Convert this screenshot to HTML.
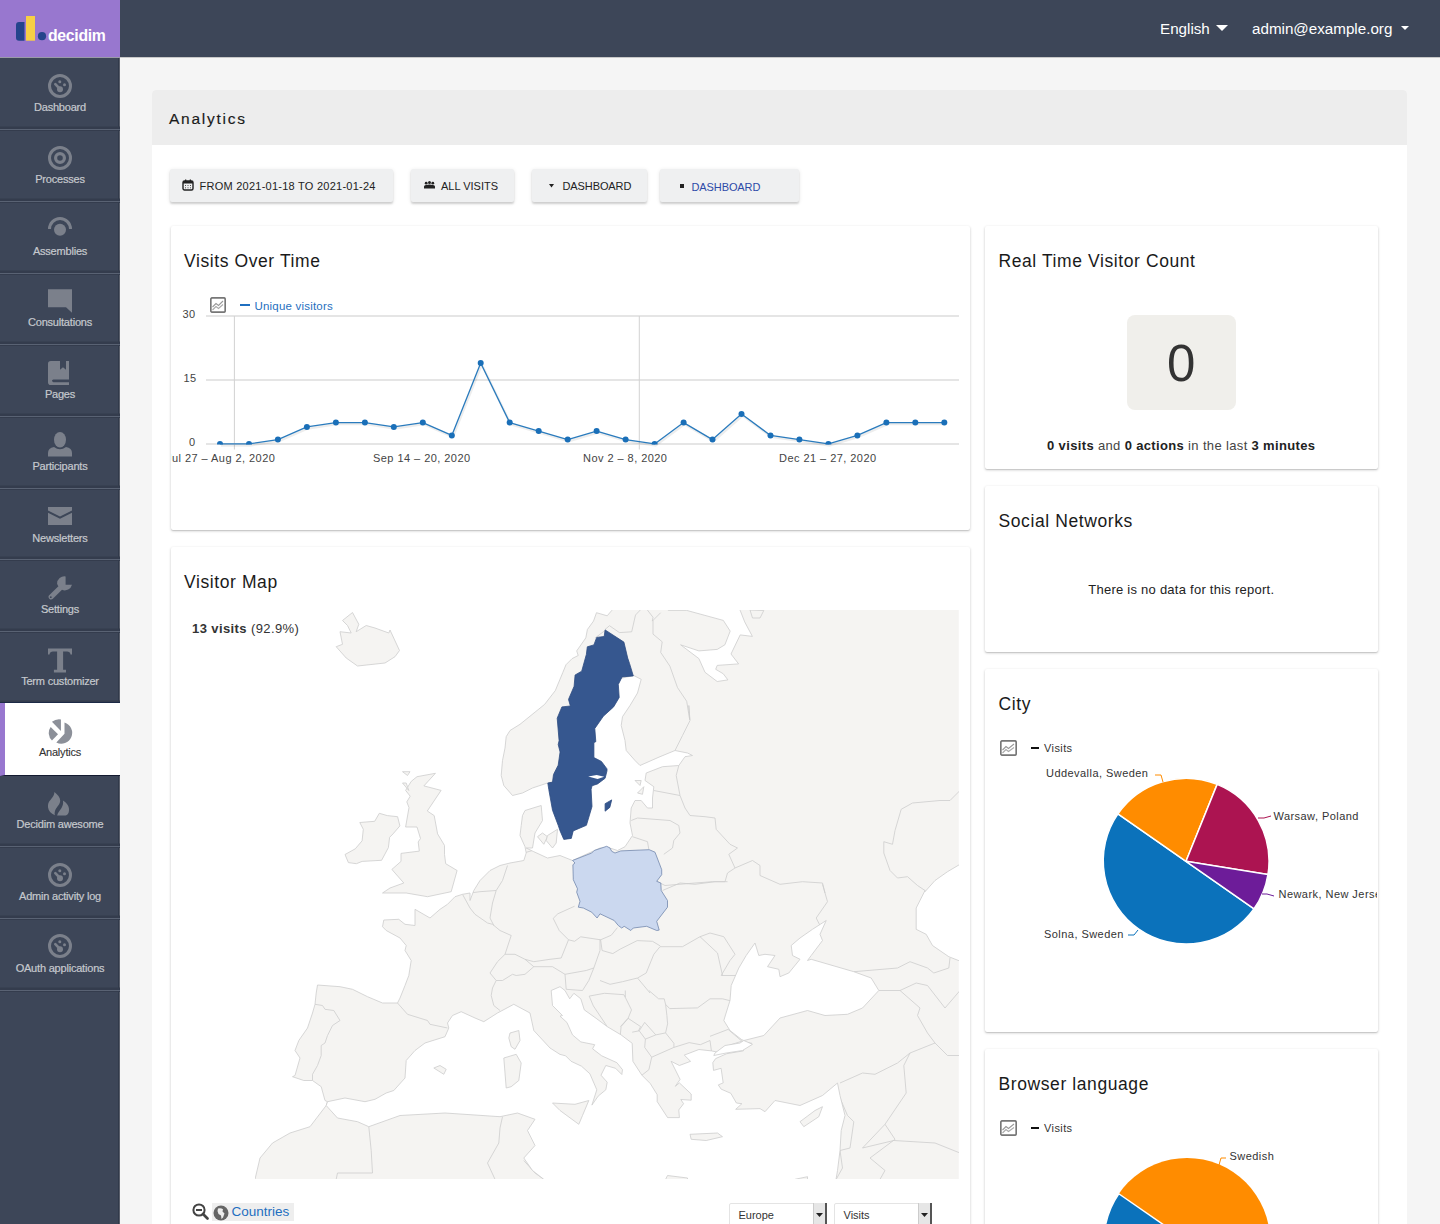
<!DOCTYPE html>
<html><head><meta charset="utf-8">
<style>
*{box-sizing:border-box;margin:0;padding:0}
html,body{width:1440px;height:1224px;overflow:hidden;background:#f5f5f5;font-family:"Liberation Sans",sans-serif;}
.abs{position:absolute}
#side{position:absolute;left:0;top:0;width:120px;height:1224px;background:#3d4658;box-shadow:inset -1px 0 0 #5a5f6b, inset -2px 0 0 #313a4b}
#logo{position:absolute;left:0;top:0;width:120px;height:58px;background:#9877cf;border-bottom:1px solid #9a9aa8}
.nav{position:absolute;left:0;width:120px;height:71.72px;border-bottom:1.5px solid #596273;box-shadow:0 1px 0 #343c4d, inset 0 -2.5px 0 #343c4d;text-align:center;color:#c6c9ce;font-size:11px;letter-spacing:-0.2px;-webkit-text-stroke:0.2px #c6c9ce}
.nav .lbl{position:absolute;left:0;right:0;top:41.8px;line-height:14px}
.nav svg{position:absolute;left:48px;top:15.4px}
.nav.act{background:#fff;color:#333;-webkit-text-stroke:0.1px #333;border-left:5px solid #9877cf;border-bottom-color:#141a30;width:120px;box-shadow:0 -1px 0 #1c2a46}
.nav.act svg{left:43px}
.nav.act .lbl{left:-5px}
#top{position:absolute;left:120px;top:0;width:1320px;height:58px;background:#3d4658;border-bottom:1px solid #c8c8c8}
#top .lnk{position:absolute;top:19px;color:#fff;font-size:15.2px;line-height:20px}
.caret{display:inline-block;width:0;height:0;border-left:6px solid transparent;border-right:6px solid transparent;border-top:6px solid #fff;vertical-align:middle;margin-left:6px;position:relative;top:-2px}
#card{position:absolute;left:152px;top:90px;width:1255px;height:1200px;background:#fff;border-radius:4px 4px 0 0;}
#card .hd{height:55px;background:#ededed;border-radius:4px 4px 0 0;position:relative}
#card .hd span{position:absolute;left:17px;top:19.5px;font-size:15.5px;letter-spacing:1.75px;color:#1a1a1a;-webkit-text-stroke:0.15px #1a1a1a}
.btn{position:absolute;top:169px;height:33px;background:#eff0f1;box-shadow:0 2px 2px rgba(0,0,0,.14),0 1px 4px rgba(0,0,0,.10);border-radius:2px;font-size:11px;color:#222;line-height:33px;white-space:nowrap}
.btn .t{position:absolute;top:1px}
.w{position:absolute;background:#fff;box-shadow:0 1px 1px rgba(0,0,0,.10),0 1px 3px rgba(0,0,0,.20);border-radius:2px}
.w h2{position:absolute;left:13.5px;top:24px;font-weight:normal;font-size:17.5px;color:#1a1a1a;line-height:22px;letter-spacing:.59px;white-space:nowrap}
.tx{position:absolute;white-space:nowrap;line-height:1}
</style></head><body>
<div id="side">
  <div id="logo">
    <svg width="120" height="57" viewBox="0 0 120 57">
      <path d="M19 22h5.5v18.7H19a3 3 0 0 1-3-3V25a3 3 0 0 1 3-3z" fill="#24448c"/>
      <rect x="26" y="16" width="9" height="24.7" fill="#f7cf45"/>
      <circle cx="42" cy="36.2" r="4.1" fill="#24448c"/>
      <text x="48" y="40.7" font-family="Liberation Sans" font-weight="bold" font-size="15.8" fill="#fff" letter-spacing="-0.3">decidim</text>
    </svg>
  </div>
<div class="nav" style="top:58.40px"><svg width="24" height="25" viewBox="0 0 24 25"><circle cx="12" cy="12" r="10.5" fill="none" stroke="#7b808b" stroke-width="3"/><circle cx="11.8" cy="7.8" r="1.5" fill="#7b808b"/><circle cx="16.5" cy="10.7" r="1.5" fill="#7b808b"/><path d="M7.3 10.1L12 15" stroke="#7b808b" stroke-width="2.6" stroke-linecap="round"/><circle cx="12" cy="15.3" r="3" fill="#7b808b"/></svg><div class="lbl">Dashboard</div></div>
<div class="nav" style="top:130.12px"><svg width="24" height="25" viewBox="0 0 24 25"><circle cx="12" cy="12" r="10.5" fill="none" stroke="#7b808b" stroke-width="3"/><circle cx="12" cy="12" r="4.4" fill="none" stroke="#7b808b" stroke-width="3.2"/></svg><div class="lbl">Processes</div></div>
<div class="nav" style="top:201.84px"><svg width="24" height="25" viewBox="0 0 24 25"><path d="M1.5 12A10.5 10.5 0 0 1 22.5 12" fill="none" stroke="#7b808b" stroke-width="3"/><circle cx="12" cy="12.8" r="6" fill="#7b808b"/></svg><div class="lbl">Assemblies</div></div>
<div class="nav" style="top:273.56px"><svg width="24" height="25" viewBox="0 0 24 25"><path d="M0 0.2H24V23.8L18 18.2H0Z" fill="#7b808b"/></svg><div class="lbl">Consultations</div></div>
<div class="nav" style="top:345.28px"><svg width="24" height="25" viewBox="0 0 24 25"><path d="M2.8 0H12V8.8L15 6.3L18 8.8V0H21V18.5H5.4A1.9 1.4 0 0 0 5.4 21.2H21V24H2.8A2.8 2.8 0 0 1 0 21.2V2.8A2.8 2.8 0 0 1 2.8 0Z" fill="#7b808b"/></svg><div class="lbl">Pages</div></div>
<div class="nav" style="top:417.00px"><svg width="24" height="25" viewBox="0 0 24 25"><ellipse cx="12" cy="7.8" rx="6" ry="7.7" fill="#7b808b"/><path d="M0 24.5V21Q0 16 6 15Q12 19.5 18 15Q24 16 24 21V24.5Z" fill="#7b808b"/></svg><div class="lbl">Participants</div></div>
<div class="nav" style="top:488.72px"><svg width="24" height="25" viewBox="0 0 24 25"><path d="M0 2.9H24V6.6L12 12.6L0 6.6Z" fill="#7b808b"/><path d="M0 8.7L12 14.7L24 8.7V21.1H0Z" fill="#7b808b"/></svg><div class="lbl">Newsletters</div></div>
<div class="nav" style="top:560.44px"><svg width="24" height="25" viewBox="0 0 24 25"><path d="M9.1 7.7A7.4 7.4 0 0 1 17.6 0.4V8.8H24A7.4 7.4 0 0 1 14 13.8L4.6 23.1A2.7 2.7 0 0 1 0.9 19.4L10.4 10.2A7.4 7.4 0 0 1 9.1 7.7Z" fill="#7b808b"/><circle cx="2.8" cy="21.2" r="0.9" fill="#3d4658"/></svg><div class="lbl">Settings</div></div>
<div class="nav" style="top:632.16px"><svg width="24" height="25" viewBox="0 0 24 25"><path d="M0 0.6H24V6.4H22.5Q22 3.6 19 3.6H15.1V21.7H18V24.4H5.9V21.7H9.1V3.6H5Q2 3.6 1.5 6.4H0Z" fill="#7b808b"/></svg><div class="lbl">Term customizer</div></div>
<div class="nav act" style="top:703.1px;height:72.5px"><svg width="25" height="26" viewBox="-0.6 -0.6 24 25" style="transform:translate(0px,0.5px) scale(1.04)"><path d="M15.1 3.6A10 10 0 1 1 7.5 22L15.1 14Z" fill="#8c9099"/><path d="M11.8 11.4L3.5 3A10.6 10.6 0 0 1 11.8 0.8Z" fill="#8c9099"/><path d="M9.1 14.4L2.3 7.8A9.5 9.5 0 0 0 3.5 20.2Z" fill="#8c9099"/></svg><div class="lbl">Analytics</div></div>
<div class="nav" style="top:775.60px"><svg width="24" height="25" viewBox="0 0 24 25"><path d="M6.4 0.9C10 4 13 7 12 11C11.5 14 8 16.5 7 20C6.5 22 6.5 23 7 24.3C2 22 -0.5 18.5 0 14C0.5 9 6.5 6.5 6.4 0.9Z" fill="#7b808b"/><path d="M14.9 9.6C19 12 21.5 16 21 19.5C20.8 22.5 19.5 24 17.5 24.5H9.1C10 21 12 19.5 13.5 17C15 14.5 15.5 12 14.9 9.6Z" fill="#7b808b"/></svg><div class="lbl">Decidim awesome</div></div>
<div class="nav" style="top:847.32px"><svg width="24" height="25" viewBox="0 0 24 25"><circle cx="12" cy="12" r="10.5" fill="none" stroke="#7b808b" stroke-width="3"/><circle cx="11.8" cy="7.8" r="1.5" fill="#7b808b"/><circle cx="16.5" cy="10.7" r="1.5" fill="#7b808b"/><path d="M7.3 10.1L12 15" stroke="#7b808b" stroke-width="2.6" stroke-linecap="round"/><circle cx="12" cy="15.3" r="3" fill="#7b808b"/></svg><div class="lbl">Admin activity log</div></div>
<div class="nav" style="top:919.04px"><svg width="24" height="25" viewBox="0 0 24 25"><circle cx="12" cy="12" r="10.5" fill="none" stroke="#7b808b" stroke-width="3"/><circle cx="11.8" cy="7.8" r="1.5" fill="#7b808b"/><circle cx="16.5" cy="10.7" r="1.5" fill="#7b808b"/><path d="M7.3 10.1L12 15" stroke="#7b808b" stroke-width="2.6" stroke-linecap="round"/><circle cx="12" cy="15.3" r="3" fill="#7b808b"/></svg><div class="lbl">OAuth applications</div></div>
</div>
<div id="top">
  <div class="lnk" style="left:1040px">English<span class="caret"></span></div>
  <div class="lnk" style="left:1132px">admin@example.org<span class="caret" style="border-width:4.5px 4px 0 4px;margin-left:9px"></span></div>
</div>
<div id="card"><div class="hd"><span>Analytics</span></div></div>

<div class="btn" style="left:169.5px;width:223px">
  <svg class="abs" style="left:12px;top:10px" width="12" height="12" viewBox="0 0 12 12"><rect x="1" y="2" width="10" height="9" rx="1.5" fill="none" stroke="#222" stroke-width="1.4"/><rect x="1" y="2" width="10" height="2.5" fill="#222"/><rect x="3" y="0.5" width="1.3" height="2.5" fill="#222"/><rect x="7.7" y="0.5" width="1.3" height="2.5" fill="#222"/><g fill="#555"><rect x="3" y="6" width="1" height="1"/><rect x="5.5" y="6" width="1" height="1"/><rect x="8" y="6" width="1" height="1"/><rect x="3" y="8.3" width="1" height="1"/><rect x="5.5" y="8.3" width="1" height="1"/><rect x="8" y="8.3" width="1" height="1"/></g></svg>
  <span class="t" style="left:30px;letter-spacing:.25px">FROM 2021-01-18 TO 2021-01-24</span></div>
<div class="btn" style="left:411px;width:102.5px">
  <svg class="abs" style="left:13px;top:12px" width="11" height="8" viewBox="0 0 11 8"><g fill="#222"><circle cx="2.2" cy="2.2" r="1.4"/><circle cx="5.5" cy="1.6" r="1.5"/><circle cx="8.8" cy="2.2" r="1.4"/><path d="M0 7.5V5.5Q0 4 2 4H3Q3.5 3.6 5.5 3.4Q7.5 3.6 8 4H9Q11 4 11 5.5V7.5Z"/></g></svg>
  <span class="t" style="left:30px">ALL VISITS</span></div>
<div class="btn" style="left:531.5px;width:115px">
  <svg class="abs" style="left:17px;top:15px" width="5" height="4" viewBox="0 0 5 4"><path d="M0 0H5L2.5 3.5Z" fill="#222"/></svg>
  <span class="t" style="left:31px;letter-spacing:-.1px">DASHBOARD</span></div>
<div class="btn" style="left:659.5px;width:139px">
  <svg class="abs" style="left:20px;top:15px" width="5" height="5" viewBox="0 0 5 5"><rect width="4" height="4" fill="#222"/></svg>
  <span class="t" style="left:32px;top:2px;color:#2d4aa8;letter-spacing:-.1px">DASHBOARD</span></div>

<!-- Visits over time -->
<div class="w" style="left:170.5px;top:226px;width:799.5px;height:303.5px"><h2>Visits Over Time</h2></div>
<svg width="1440" height="1224" style="position:absolute;left:0;top:0" viewBox="0 0 1440 1224">
<line x1="206" y1="316.1" x2="959" y2="316.1" stroke="#dcdcdc" stroke-width="1.5"/>
<line x1="206" y1="380.0" x2="959" y2="380.0" stroke="#dcdcdc" stroke-width="1.5"/>
<line x1="206" y1="443.9" x2="959" y2="443.9" stroke="#dcdcdc" stroke-width="1.5"/>
<line x1="234.4" y1="316" x2="234.4" y2="449.5" stroke="#d2d2d2" stroke-width="1"/>
<line x1="639.3" y1="316" x2="639.3" y2="449.5" stroke="#d2d2d2" stroke-width="1"/>
<polyline points="220.0,443.9 249.0,443.9 277.9,439.6 306.9,426.9 335.9,422.6 364.9,422.6 393.8,426.9 422.8,422.6 451.8,435.4 480.7,363.0 509.7,422.6 538.7,431.1 567.7,439.6 596.6,431.1 625.6,439.6 654.6,443.9 683.6,422.6 712.5,439.6 741.5,414.1 770.5,435.4 799.4,439.6 828.4,443.9 857.4,435.4 886.4,422.6 915.3,422.6 944.3,422.6" fill="none" stroke="rgba(0,0,0,0.07)" stroke-width="2.5" transform="translate(1,1.5)"/>
<polyline points="220.0,443.9 249.0,443.9 277.9,439.6 306.9,426.9 335.9,422.6 364.9,422.6 393.8,426.9 422.8,422.6 451.8,435.4 480.7,363.0 509.7,422.6 538.7,431.1 567.7,439.6 596.6,431.1 625.6,439.6 654.6,443.9 683.6,422.6 712.5,439.6 741.5,414.1 770.5,435.4 799.4,439.6 828.4,443.9 857.4,435.4 886.4,422.6 915.3,422.6 944.3,422.6" fill="none" stroke="#2a7bbd" stroke-width="1.3" stroke-linejoin="round"/>
<svg x="200" y="300" width="770" height="144.6" viewBox="200 300 770 144.6" overflow="hidden">
<circle cx="220.0" cy="443.9" r="3" fill="#1a6fb8"/>
<circle cx="249.0" cy="443.9" r="3" fill="#1a6fb8"/>
<circle cx="277.9" cy="439.6" r="3" fill="#1a6fb8"/>
<circle cx="306.9" cy="426.9" r="3" fill="#1a6fb8"/>
<circle cx="335.9" cy="422.6" r="3" fill="#1a6fb8"/>
<circle cx="364.9" cy="422.6" r="3" fill="#1a6fb8"/>
<circle cx="393.8" cy="426.9" r="3" fill="#1a6fb8"/>
<circle cx="422.8" cy="422.6" r="3" fill="#1a6fb8"/>
<circle cx="451.8" cy="435.4" r="3" fill="#1a6fb8"/>
<circle cx="480.7" cy="363.0" r="3" fill="#1a6fb8"/>
<circle cx="509.7" cy="422.6" r="3" fill="#1a6fb8"/>
<circle cx="538.7" cy="431.1" r="3" fill="#1a6fb8"/>
<circle cx="567.7" cy="439.6" r="3" fill="#1a6fb8"/>
<circle cx="596.6" cy="431.1" r="3" fill="#1a6fb8"/>
<circle cx="625.6" cy="439.6" r="3" fill="#1a6fb8"/>
<circle cx="654.6" cy="443.9" r="3" fill="#1a6fb8"/>
<circle cx="683.6" cy="422.6" r="3" fill="#1a6fb8"/>
<circle cx="712.5" cy="439.6" r="3" fill="#1a6fb8"/>
<circle cx="741.5" cy="414.1" r="3" fill="#1a6fb8"/>
<circle cx="770.5" cy="435.4" r="3" fill="#1a6fb8"/>
<circle cx="799.4" cy="439.6" r="3" fill="#1a6fb8"/>
<circle cx="828.4" cy="443.9" r="3" fill="#1a6fb8"/>
<circle cx="857.4" cy="435.4" r="3" fill="#1a6fb8"/>
<circle cx="886.4" cy="422.6" r="3" fill="#1a6fb8"/>
<circle cx="915.3" cy="422.6" r="3" fill="#1a6fb8"/>
<circle cx="944.3" cy="422.6" r="3" fill="#1a6fb8"/>
</svg>
</svg>
<svg class="abs" style="left:210px;top:297px" width="16" height="16" viewBox="0 0 16 16"><rect x="0.8" y="0.8" width="14.4" height="14.4" rx="1.5" fill="#fff" stroke="#777" stroke-width="1.7"/><polyline points="2.5,10 6,6.5 8.5,8.5 13,4" fill="none" stroke="#999" stroke-width="1.1"/><polyline points="2.5,13 6,9.5 8.5,11.5 13,7.5" fill="none" stroke="#aaa" stroke-width="1.1"/></svg>
<div class="abs" style="left:240px;top:304px;width:10px;height:2px;background:#1f6fc0"></div>
<div class="tx" style="left:254.5px;top:300.5px;font-size:11.5px;color:#1f6fc0;letter-spacing:.2px">Unique visitors</div>
<div class="tx" style="left:182.5px;top:309px;font-size:11px;color:#444;letter-spacing:.3px">30</div>
<div class="tx" style="left:183.5px;top:373px;font-size:11px;color:#444;letter-spacing:.3px">15</div>
<div class="tx" style="left:189px;top:437px;font-size:11px;color:#444">0</div>
<div class="abs" style="left:171px;top:440px;width:798px;height:30px;overflow:hidden">
  <div class="tx" style="left:-5px;top:12.5px;font-size:11px;color:#444;letter-spacing:.45px">Jul 27 – Aug 2, 2020</div>
  <div class="tx" style="left:202px;top:12.5px;font-size:11px;color:#444;letter-spacing:.45px">Sep 14 – 20, 2020</div>
  <div class="tx" style="left:412px;top:12.5px;font-size:11px;color:#444;letter-spacing:.45px">Nov 2 – 8, 2020</div>
  <div class="tx" style="left:608px;top:12.5px;font-size:11px;color:#444;letter-spacing:.45px">Dec 21 – 27, 2020</div>
</div>

<!-- Visitor map -->
<div class="w" style="left:170.5px;top:546.5px;width:799.5px;height:700px"><h2>Visitor Map</h2></div>
<svg width="703.75" height="569.0" viewBox="255 609.5 703.75 569.0" style="position:absolute;left:255px;top:609.5px;overflow:hidden">
<g stroke-linejoin="round">
<rect x="255" y="609.5" width="703.75" height="569.0" fill="#f5f4f2"/>
<g fill="none" stroke="#cdcdcd" stroke-width="0.8">
<polyline points="637.5,977.5 650.0,992.5"/>
<polyline points="589.2,995.6 604.4,992.8 623.9,994.2 625.3,996.9 631.5,1009.4 628.1,1017.8 621.1,1026.1 620.4,1033.8"/>
<polyline points="589.2,995.6 593.3,1005.3 607.2,1026.1"/>
<polyline points="620.4,1026.1 628.1,1017.8 640.6,1026.1 638.5,1030.3"/>
<polyline points="625.3,990.0 625.3,996.9"/>
<polyline points="639.2,1030.3 644.7,1021.9 655.8,1034.4"/>
<polyline points="665.6,1032.4 667.6,1023.3 666.9,1015.0 665.6,1003.9 664.2,998.3 658.6,998.3 648.9,990.0"/>
<polyline points="632.2,1031.7 639.2,1030.3 645.4,1038.6 644.7,1046.9 651.7,1056.7 648.9,1069.2 641.9,1074.7"/>
<polyline points="645.4,1038.6 655.8,1034.4 665.6,1032.4 673.9,1042.8 673.9,1046.9 651.7,1056.7"/>
<polyline points="673.9,1046.9 689.2,1042.1 700.3,1044.2 710.0,1040.0 711.4,1050.4"/>
<polyline points="710.0,1035.8 728.1,1028.9 741.9,1040.7"/>
<polyline points="665.6,1003.9 669.7,1008.1 697.5,1007.4 710.0,998.3 722.5,998.3 730.8,1000.4"/>
<polyline points="462.5,893.8 470.0,907.5 475.0,913.8 487.5,922.5 492.5,923.8 500.0,930.0 511.2,935.0 505.0,953.8"/>
<polyline points="470.0,892.5 480.0,891.2 496.2,890.0"/>
<polyline points="507.5,865.0 502.5,880.0 496.2,890.0 492.5,902.5 490.0,917.5 493.8,925.0"/>
<polyline points="523.8,852.5 532.5,850.0"/>
<polyline points="505.0,953.8 515.0,953.8 525.0,958.8 533.8,966.2 525.0,973.8 516.2,975.0 512.5,973.8 502.5,980.0 496.2,980.0 490.0,972.5 497.5,961.2 505.0,953.8"/>
<polyline points="525.0,958.8 533.8,961.2 550.0,958.8 561.2,957.5 568.5,939.3 559.3,930.1 553.2,917.9 557.8,913.3 574.6,905.7"/>
<polyline points="617.4,927.1 611.3,934.7 600.6,939.3 580.7,936.3 574.6,940.8 568.5,939.3"/>
<polyline points="600.6,939.3 602.1,950.0 612.8,953.1 620.4,948.5 637.2,940.1 652.5,940.8 660.2,945.4"/>
<polyline points="600.0,938.8 600.0,950.0 593.8,967.5 586.2,970.0 565.0,973.8 552.5,966.2 533.8,966.2"/>
<polyline points="565.0,973.8 566.2,988.8"/>
<polyline points="566.2,988.8 582.5,990.0 588.8,980.0 593.8,967.5"/>
<polyline points="496.2,980.0 492.5,987.5 491.2,995.0 493.8,1005.0 500.0,1010.0"/>
<polyline points="397.5,1002.5 407.5,1013.8 427.5,1020.0 430.0,1023.8 447.5,1027.5"/>
<polyline points="315.0,1003.8 322.5,1005.0 325.0,1008.8 333.8,1010.0 340.0,1020.0 332.5,1025.0 327.5,1035.0 325.0,1042.5 321.2,1045.0 321.2,1055.0 317.5,1065.0 312.5,1073.8 312.5,1080.0"/>
<polyline points="368.8,1126.2 371.2,1150.0 372.5,1172.5 337.5,1172.5 336.2,1178.8"/>
<polyline points="502.5,1116.2 500.0,1127.5 498.8,1142.5 487.5,1162.5 495.0,1178.8"/>
<polyline points="523.8,1160.0 535.0,1172.5 543.8,1178.8"/>
<polyline points="660.0,946.2 653.8,953.8 646.2,972.5 637.5,977.5 622.5,981.2 610.0,983.8 600.0,980.0"/>
<polyline points="660.0,946.2 682.5,946.2 700.0,936.2 710.0,932.5 723.8,936.2 735.0,953.8 730.0,960.0 721.2,975.0 737.5,975.0"/>
<polyline points="700.0,936.2 717.5,952.5 722.5,975.0"/>
<polyline points="662.5,890.0 680.0,882.5 695.0,883.8 715.0,881.2 727.5,881.2"/>
<polyline points="822.5,883.8 827.5,901.2 816.2,917.5 820.0,925.0"/>
<polyline points="853.8,971.2 897.5,967.5 910.0,961.2 927.5,967.5 933.8,972.5 948.8,967.5 950.0,957.5"/>
<polyline points="878.8,990.0 900.0,990.0 916.2,982.5 927.5,985.0 945.0,1007.5 960.0,990.0"/>
<polyline points="900.0,990.0 920.0,1007.5 917.5,1015.0 927.5,1032.5 935.0,1042.5 947.5,1055.0 960.0,1055.0"/>
<polyline points="840.0,1082.5 862.5,1072.5 875.0,1073.8 897.5,1062.5 910.0,1052.5 935.0,1042.5"/>
<polyline points="910.0,1052.5 903.8,1065.0 906.2,1092.5 885.0,1123.8 862.5,1147.5"/>
<polyline points="840.0,1097.5 847.5,1115.0 853.8,1121.2 850.0,1147.5 840.0,1150.0 842.5,1167.5 836.2,1178.8"/>
<polyline points="862.5,1147.5 893.8,1140.0 935.0,1142.5 960.0,1152.5"/>
<polyline points="885.0,1123.8 895.0,1138.8 870.0,1157.5 885.0,1170.0 880.0,1178.8"/>
<polyline points="605.0,629.0 609.5,625.2 619.4,632.1 631.7,631.3 635.5,614.5 640.8,609.0"/>
<polyline points="647.0,609.0 653.0,616.8 652.3,620.6 660.7,612.2"/>
<polyline points="653.0,619.9 653.0,633.6 662.2,641.3 660.7,651.9 669.9,665.7 677.5,687.1 686.7,700.8 689.7,719.2 688.8,705.0 690.0,720.0 682.5,735.0 675.0,750.0"/>
<polyline points="678.8,765.0 676.2,775.0 680.0,795.0"/>
<polyline points="653.8,790.0 680.0,795.0 685.0,807.5 690.0,815.0 705.0,816.2 715.0,817.5 716.2,828.8 730.0,843.8 737.5,847.5 728.8,853.8 735.0,867.5"/>
<polyline points="631.2,820.0 637.5,817.5 670.0,820.0 678.8,825.0 680.0,832.5 673.8,840.0 672.5,847.5 663.8,853.8"/>
<polyline points="632.5,836.2 647.5,841.2 648.8,848.8"/>
<polyline points="657.5,881.2 665.0,885.0 695.0,882.5 712.5,881.2 725.0,881.2 727.5,872.5 735.0,867.5 752.5,860.0 760.0,865.0 760.0,875.0 780.0,883.8 802.5,881.2 822.5,882.5 825.0,892.5"/>
<polyline points="960.0,790.0 950.0,800.0 940.0,800.0 912.5,802.5 901.2,808.8 895.0,830.0 892.5,843.8 883.8,841.2 883.8,852.5 890.0,870.0 897.5,877.5 907.5,876.2 917.5,885.0 925.0,890.0"/>
<polyline points="595.0,637.5 605.0,630.0"/>
</g>
<g fill="#fff" stroke="#cdcdcd" stroke-width="0.8">
<polygon points="180.0,603.5 612.0,604.0 611.8,609.9 607.2,615.3 596.5,612.2 593.5,620.6 587.4,629.0 585.8,637.4 576.7,650.4 578.2,655.0 572.1,658.1 566.0,664.2 562.9,671.8 555.3,690.1 544.6,703.9 520.0,723.8 510.0,730.0 506.2,736.2 505.0,747.5 502.5,760.0 501.2,775.0 503.8,785.0 512.5,795.0 522.5,792.5 532.5,787.5 547.5,782.5 560.0,782.0 575.0,790.0 575.0,760.0 585.0,730.0 605.0,700.0 620.0,678.0 633.8,675.0 641.2,678.8 637.5,692.5 630.0,705.0 622.5,716.2 621.2,725.0 625.0,740.0 626.2,750.0 635.0,760.0 640.0,765.0 660.0,756.2 675.0,750.0 687.5,752.5 692.5,755.0 685.0,756.2 678.8,765.0 662.5,766.2 646.2,772.5 645.0,780.0 653.8,786.2 652.5,797.5 652.5,807.5 647.5,807.5 641.2,800.0 635.0,800.0 631.2,807.5 630.0,822.5 632.5,835.0 625.0,846.2 617.5,850.0 610.0,847.5 600.0,847.5 572.5,860.0 560.0,855.0 547.5,857.5 533.8,851.2 526.2,847.5 532.5,847.5 535.0,832.5 542.5,820.0 541.2,805.0 525.0,810.0 522.5,815.0 521.2,825.0 520.0,835.0 525.0,846.2 526.2,852.5 523.8,860.0 510.0,862.5 500.0,865.0 490.0,870.0 480.0,880.0 473.8,890.0 470.0,900.0 470.0,892.5 462.5,893.8 455.0,896.2 447.5,903.8 440.0,908.8 430.0,917.5 415.0,908.8 415.0,925.0 405.0,923.8 398.8,918.8 383.8,919.5 382.5,926.2 386.2,930.0 400.0,937.5 406.2,945.0 405.0,950.0 411.2,960.0 408.8,975.0 405.0,985.0 400.0,997.5 397.5,1002.5 382.5,1002.5 367.5,996.2 352.5,988.8 340.0,986.2 317.5,984.5 316.2,992.5 315.0,1003.8 312.5,1012.5 307.5,1027.5 298.8,1040.0 295.0,1050.0 300.0,1057.5 295.0,1075.0 292.5,1076.2 303.8,1080.0 312.5,1080.0 321.2,1086.2 325.0,1100.0 327.5,1101.2 326.2,1105.0 310.0,1126.2 290.0,1132.5 272.5,1142.5 260.0,1157.5 255.0,1178.8 180.0,1184.5"/>
<polygon points="327.5,1101.2 345.0,1097.5 365.0,1101.2 375.0,1098.8 386.2,1092.5 393.8,1090.0 405.0,1077.5 406.2,1060.0 415.0,1050.0 425.0,1042.5 445.0,1036.2 448.8,1027.5 447.5,1022.5 452.5,1015.0 461.2,1011.2 475.0,1017.5 483.8,1021.2 497.5,1012.5 513.8,1003.8 530.0,1012.5 533.8,1030.0 550.0,1047.5 560.0,1053.9 565.6,1055.3 571.1,1060.8 581.5,1065.7 589.9,1073.3 596.8,1089.3 591.9,1104.6 598.2,1095.6 605.8,1089.3 607.2,1081.7 601.0,1074.7 605.8,1065.0 615.6,1067.8 621.8,1074.0 622.5,1069.2 616.9,1062.2 601.7,1055.3 592.6,1048.3 594.7,1044.2 580.8,1041.4 572.5,1034.4 566.9,1021.9 560.0,1015.7 562.5,1015.0 552.5,1005.0 551.2,990.0 560.0,986.2 565.0,990.0 569.7,998.3 573.9,992.8 580.8,998.3 584.3,1009.4 596.1,1017.8 607.2,1026.1 621.1,1034.4 632.2,1042.8 632.9,1060.8 641.9,1074.7 650.3,1083.1 657.2,1094.2 657.2,1101.1 667.6,1117.1 679.4,1117.1 678.8,1109.4 683.6,1103.2 680.8,1099.0 691.2,1099.7 691.2,1093.5 679.4,1082.4 675.3,1085.8 680.1,1078.9 671.1,1060.8 679.4,1065.0 690.6,1060.8 684.3,1054.6 698.9,1049.0 711.4,1050.4 718.3,1051.8 726.7,1045.6 741.9,1040.7 751.7,1042.8 743.3,1046.9 743.3,1050.4 726.7,1053.2 715.6,1058.1 712.8,1062.2 713.5,1069.9 721.1,1067.8 723.2,1082.4 718.3,1084.4 721.1,1088.6 730.8,1092.8 736.4,1102.5 741.9,1103.2 735.7,1108.8 760.0,1108.1 765.0,1111.2 775.0,1100.0 800.0,1105.0 822.5,1095.0 837.5,1082.5 840.0,1095.0 845.0,1115.0 841.2,1130.0 840.0,1150.0 837.5,1170.0 835.0,1185.0 807.5,1185.0 807.5,1176.2 795.0,1178.8 795.0,1185.0 687.5,1185.0 687.5,1177.5 667.5,1175.0 662.5,1185.0 543.8,1185.0 543.8,1178.8 532.5,1170.0 523.8,1157.5 535.0,1145.0 527.5,1130.0 535.0,1118.8 517.5,1112.5 500.0,1116.2 445.0,1112.5 400.0,1115.0 368.8,1126.2 357.5,1121.2 337.5,1117.5 326.2,1105.0"/>
<polygon points="743.8,1040.0 763.8,1035.0 780.0,1017.5 807.5,1010.0 825.0,1015.0 847.5,1013.8 862.5,1007.5 878.8,990.0 871.2,977.5 853.8,971.2 811.2,958.8 807.5,960.0 811.2,955.0 822.5,940.0 820.0,933.8 826.2,920.0 812.5,928.8 800.0,937.5 791.2,945.0 792.5,955.0 800.0,958.8 788.8,972.5 780.0,976.2 778.8,968.8 767.5,966.2 775.0,955.0 765.0,953.8 758.8,955.0 755.0,942.5 746.2,955.0 738.8,967.5 731.2,985.0 730.0,1000.0 723.8,1020.0 730.0,1030.0 741.2,1038.8"/>
<polygon points="713.8,1055.0 726.2,1052.5 742.5,1050.0 752.5,1043.8 743.8,1040.0 740.0,1042.5 725.0,1045.0 715.0,1052.5"/>
<polygon points="925.0,891.2 935.0,880.0 947.5,871.2 960.0,863.8 964.8,962.5 948.8,956.2 932.5,945.0 926.2,933.8 916.2,928.8 916.2,907.5 925.0,890.0"/>
<polygon points="668.3,604.6 738.6,604.6 740.2,609.9 744.7,621.4 752.4,635.9 740.2,634.4 731.0,653.5 738.6,663.4 717.2,664.9 715.7,668.8 723.3,673.3 727.9,679.4 717.2,681.0 705.0,671.8 698.9,658.1 680.6,644.3 698.9,650.4 717.2,648.9 724.9,644.3 730.2,630.6 723.3,619.9 686.7,609.9 668.3,609.9"/>
</g>
<g fill="#f5f4f2" stroke="#cdcdcd" stroke-width="0.8">
<polygon points="352.5,612.0 358.8,623.8 356.2,631.2 366.2,625.0 375.0,627.5 388.8,632.5 390.0,629.5 399.5,650.0 395.0,656.2 385.0,662.5 357.5,665.5 346.2,657.5 336.2,646.2 342.5,643.8 340.0,631.2 351.2,632.5 347.5,625.0 342.5,620.0"/>
<polygon points="435.4,772.8 423.9,785.4 441.1,789.9 427.3,810.5 434.2,815.1 437.6,833.4 444.5,844.9 444.5,854.0 445.7,863.2 457.1,870.0 451.2,891.2 427.5,896.2 406.2,892.5 382.5,892.5 390.0,887.5 403.8,882.5 395.0,872.5 391.9,868.9 401.0,860.9 401.0,852.9 419.3,850.6 418.2,841.4 420.5,838.0 417.0,826.5 405.6,826.5 409.0,807.1 406.8,801.4 410.2,795.7 405.6,789.9 411.3,780.8 417.0,776.2"/>
<polygon points="359.8,822.0 374.7,820.8 379.3,812.8 387.3,815.1 397.6,816.2 399.9,825.4 393.0,833.4 389.6,836.8 388.4,847.1 381.6,859.8 362.1,860.9 356.4,863.2 348.4,862.1 345.0,854.0 355.3,848.3 362.1,840.3 363.3,828.8"/>
<polygon points="510.0,1032.5 518.8,1030.0 520.0,1040.0 515.0,1048.8 511.2,1046.2 508.8,1037.5"/>
<polygon points="503.8,1057.5 516.2,1053.8 521.2,1062.5 518.8,1080.0 511.2,1086.2 506.2,1087.5 505.0,1072.5"/>
<polygon points="552.5,1102.5 575.0,1103.8 588.8,1100.0 582.5,1115.0 578.8,1123.8 560.0,1110.0"/>
<polygon points="433.8,1067.5 440.0,1065.0 446.2,1068.8 443.8,1073.8"/>
<polygon points="690.0,1133.8 717.5,1132.5 722.5,1136.2 706.2,1140.0 691.2,1138.8"/>
<polygon points="800.0,1121.2 815.0,1110.0 822.5,1106.2 818.8,1116.2 803.8,1126.2"/>
<polygon points="537.5,836.2 542.5,832.5 547.5,836.2 543.8,843.8"/>
<polygon points="547.5,835.0 557.5,828.8 556.2,842.5 552.5,847.5 546.2,840.0"/>
<polygon points="402.5,771.2 410.0,771.2 407.5,775.0"/>
<polygon points="402.5,782.5 406.2,782.5 408.8,790.0"/>
<polygon points="750.0,609.5 763.8,610.0 760.0,617.5 752.5,617.5"/>
<polygon points="635.0,780.0 641.2,780.0 640.0,785.0"/>
<polygon points="637.5,792.5 643.8,786.2 642.5,793.8"/>
</g>
<polygon points="572.5,860.0 591.7,852.5 594.2,850.0 606.7,845.8 610.0,847.5 611.7,850.8 615.0,852.5 620.8,850.4 649.2,849.2 655.0,851.7 661.7,869.2 661.7,874.2 656.7,880.8 660.8,882.5 661.2,890.0 667.5,900.0 667.5,906.7 656.7,920.8 659.2,929.6 656.7,930.0 646.7,925.8 633.3,927.5 630.8,930.0 624.2,925.8 621.7,927.5 618.3,925.0 614.2,920.0 600.0,913.3 597.1,917.5 591.7,911.7 583.3,907.5 578.3,906.7 580.0,900.8 576.7,891.7 577.5,888.3 573.3,879.2 572.9,864.2 575.0,862.5 573.3,860.8" fill="#cbd8ef" stroke="#7288ad" stroke-width="0.8"/>
<polygon points="605.1,629.4 623.9,641.6 627.7,657.6 629.6,663.2 633.3,675.4 622.1,676.4 618.3,683.9 619.2,697.0 613.6,706.4 603.3,715.8 594.8,728.0 595.8,741.2 593.9,742.1 593.9,757.1 601.4,760.9 607.0,768.4 607.0,770.3 605.1,777.8 597.6,783.4 592.0,785.3 591.1,789.1 592.0,806.0 586.4,824.8 573.2,830.4 571.3,837.9 563.8,838.9 560.1,830.4 558.2,824.8 552.5,809.7 548.8,789.1 547.8,782.5 552.5,781.6 553.5,774.0 558.2,764.7 560.1,751.5 558.2,744.0 559.1,740.2 557.2,717.7 561.9,706.4 570.4,705.5 568.5,698.9 574.1,685.8 575.1,674.5 581.7,670.7 586.4,653.8 587.3,646.3 593.9,644.4 596.7,636.9 604.2,636.0" fill="#36578f" stroke="#2d4b80" stroke-width="0.8"/>
<polygon points="605.1,803.2 611.7,799.4 609.8,806.9 605.1,810.7" fill="#36578f" stroke="#2d4b80" stroke-width="0.8"/>
<polygon points="588.2,775.9 596.7,774.4 604.2,776.3 597.6,778.4" fill="#fff"/>
</g></svg>
<div class="tx" style="left:192px;top:622px;font-size:13px;color:#333;letter-spacing:.4px"><b>13 visits</b> (92.9%)</div>
<svg class="abs" style="left:192px;top:1203px" width="17" height="18" viewBox="0 0 17 18"><circle cx="7" cy="7" r="5.6" fill="none" stroke="#444" stroke-width="2"/><rect x="4" y="6" width="6" height="2" fill="#444"/><path d="M11 11L15.5 15.5" stroke="#444" stroke-width="2.6" stroke-linecap="round"/></svg>
<div class="abs" style="left:212px;top:1203px;width:82px;height:18px;background:#eeeeee"></div>
<svg class="abs" style="left:212.5px;top:1204.5px" width="16" height="16" viewBox="0 0 16 16"><circle cx="8" cy="8" r="7.5" fill="#666"/><path d="M5 3.5Q8 2.8 10 4.2L9.5 6.5L11.5 8.5L10 12.5L8.5 14L8 10.5L5.5 9L4.5 6Z" fill="#eee"/></svg>
<div class="tx" style="left:231.5px;top:1205px;font-size:13.5px;color:#1f6fc0">Countries</div>
<div class="abs" style="left:729px;top:1203px;width:98px;height:26px;background:#fff;border:1px solid #e4e4e4;border-radius:2px"></div>
<div class="tx" style="left:738.5px;top:1210px;font-size:11px;color:#333">Europe</div>
<div class="abs" style="left:812.5px;top:1203px;width:14.5px;height:26px;background:#e6e6e6;border-left:1px solid #ccc;border-right:2px solid #555"></div>
<svg class="abs" style="left:816px;top:1213px" width="7" height="4"><path d="M0 0H7L3.5 4Z" fill="#222"/></svg>
<div class="abs" style="left:834px;top:1203px;width:98px;height:26px;background:#fff;border:1px solid #e4e4e4;border-radius:2px"></div>
<div class="tx" style="left:843.5px;top:1210px;font-size:11px;color:#333">Visits</div>
<div class="abs" style="left:917.5px;top:1203px;width:14.5px;height:26px;background:#e6e6e6;border-left:1px solid #ccc;border-right:2px solid #555"></div>
<svg class="abs" style="left:921px;top:1213px" width="7" height="4"><path d="M0 0H7L3.5 4Z" fill="#222"/></svg>

<!-- right column -->
<div class="w" style="left:985px;top:226px;width:392.5px;height:243px"><h2>Real Time Visitor Count</h2>
  <div class="abs" style="left:141.5px;top:89px;width:109.5px;height:94.5px;background:#f0efeb;border-radius:8px"></div>
  <div class="tx" style="left:141.5px;top:112px;width:109.5px;text-align:center;font-size:51px;color:#333">0</div>
  <div class="tx" style="left:0;top:213px;width:392.5px;text-align:center;font-size:13px;color:#444;letter-spacing:.35px"><b style="color:#222">0 visits</b> and <b style="color:#222">0 actions</b> in the last <b style="color:#222">3 minutes</b></div>
</div>
<div class="w" style="left:985px;top:486px;width:392.5px;height:165.5px"><h2>Social Networks</h2>
  <div class="tx" style="left:0;top:97px;width:392.5px;text-align:center;font-size:13px;color:#222;letter-spacing:.25px">There is no data for this report.</div>
</div>
<div class="w" style="left:985px;top:669px;width:392.5px;height:362.5px"><h2>City</h2></div>
<div class="w" style="left:985px;top:1049px;width:392.5px;height:300px"><h2>Browser language</h2></div>
<svg width="1440" height="1224" style="position:absolute;left:0;top:0" viewBox="0 0 1440 1224">
<path d="M1186.00 861.30L1254.07 908.79A83.00 83.00 0 0 1 1117.93 813.81Z" fill="#0b72bb" stroke="#fff" stroke-width="1.5" stroke-linejoin="round"/>
<path d="M1186.00 861.30L1117.93 813.81A83.00 83.00 0 0 1 1217.15 784.37Z" fill="#ff8c00" stroke="#fff" stroke-width="1.5" stroke-linejoin="round"/>
<path d="M1186.00 861.30L1217.15 784.37A83.00 83.00 0 0 1 1267.94 874.55Z" fill="#ac1451" stroke="#fff" stroke-width="1.5" stroke-linejoin="round"/>
<path d="M1186.00 861.30L1267.94 874.55A83.00 83.00 0 0 1 1254.07 908.79Z" fill="#6d1c99" stroke="#fff" stroke-width="1.5" stroke-linejoin="round"/>
<polyline points="1155.0,775.0 1161.0,775.0 1163.0,782.0" fill="none" stroke="#ff8c00" stroke-width="1"/>
<polyline points="1258.0,818.0 1264.0,818.0 1271.0,816.0" fill="none" stroke="#ac1451" stroke-width="1"/>
<polyline points="1262.0,894.0 1267.0,894.0 1274.0,896.0" fill="none" stroke="#6d1c99" stroke-width="1"/>
<polyline points="1128.0,935.0 1134.0,935.0 1138.0,930.0" fill="none" stroke="#0b72bb" stroke-width="1"/>
<circle cx="1187" cy="1241" r="83" fill="#ff8c00"/>
<path d="M1187.00 1241.00L1145.50 1312.88A83.00 83.00 0 0 1 1118.76 1193.75Z" fill="#0b72bb" stroke="#fff" stroke-width="1.5" stroke-linejoin="round"/>
<polyline points="1219.0,1165.0 1221.0,1158.0 1226.0,1158.0" fill="none" stroke="#ff8c00" stroke-width="1"/>
</svg>
<svg class="abs" style="left:1000px;top:740px" width="17" height="16" viewBox="0 0 17 16"><rect x="0.8" y="0.8" width="15.4" height="14.4" rx="1.5" fill="#fff" stroke="#777" stroke-width="1.7"/><polyline points="2.5,10 6,6.5 8.5,8.5 14,4" fill="none" stroke="#999" stroke-width="1.1"/><polyline points="2.5,13 6,9.5 8.5,11.5 14,7.5" fill="none" stroke="#aaa" stroke-width="1.1"/></svg>
<div class="abs" style="left:1030.5px;top:747px;width:8.5px;height:2px;background:#111"></div>
<div class="tx" style="left:1044px;top:743px;font-size:11px;color:#333;letter-spacing:.4px">Visits</div>
<div class="tx" style="left:1046px;top:768px;font-size:11px;color:#333;letter-spacing:.45px">Uddevalla, Sweden</div>
<div class="tx" style="left:1273.5px;top:811px;font-size:11px;color:#333;letter-spacing:.45px">Warsaw, Poland</div>
<div class="abs" style="left:1270px;top:880px;width:106.5px;height:20px;overflow:hidden"><div class="tx" style="left:8.5px;top:9px;font-size:11px;color:#333;letter-spacing:.45px">Newark, New Jersey</div></div>
<div class="tx" style="left:1044px;top:929px;font-size:11px;color:#333;letter-spacing:.45px">Solna, Sweden</div>
<svg class="abs" style="left:1000px;top:1120px" width="17" height="16" viewBox="0 0 17 16"><rect x="0.8" y="0.8" width="15.4" height="14.4" rx="1.5" fill="#fff" stroke="#777" stroke-width="1.7"/><polyline points="2.5,10 6,6.5 8.5,8.5 14,4" fill="none" stroke="#999" stroke-width="1.1"/><polyline points="2.5,13 6,9.5 8.5,11.5 14,7.5" fill="none" stroke="#aaa" stroke-width="1.1"/></svg>
<div class="abs" style="left:1030.5px;top:1127px;width:8.5px;height:2px;background:#111"></div>
<div class="tx" style="left:1044px;top:1123px;font-size:11px;color:#333;letter-spacing:.4px">Visits</div>
<div class="tx" style="left:1229.5px;top:1151px;font-size:11px;color:#333;letter-spacing:.45px">Swedish</div>
</body></html>
